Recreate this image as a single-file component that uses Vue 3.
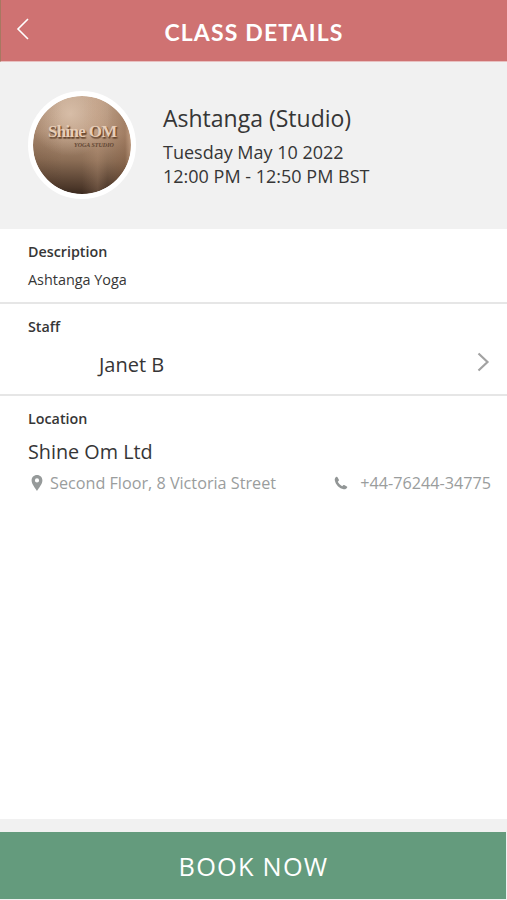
<script setup>
const details = {
  name: 'Ashtanga (Studio)',
  date: 'Tuesday May 10 2022',
  time: '12:00 PM - 12:50 PM BST',
  description: 'Ashtanga Yoga',
  staff: 'Janet B',
  venue: 'Shine Om Ltd',
  address: 'Second Floor, 8 Victoria Street',
  phone: '+44-76244-34775',
}
</script>

<template>
  <div class="screen">
    <header class="bar">
      <svg class="back" width="14" height="22" viewBox="0 0 14 22">
        <path d="M12 1 L2 11 L12 21" fill="none" stroke="#fff" stroke-width="1.6" />
      </svg>
      <h1 class="bar-title">CLASS DETAILS</h1>
    </header>

    <section class="hero">
      <div class="avatar">
        <span class="logo">Shine OM</span>
        <span class="tag">YOGA STUDIO</span>
      </div>
      <div class="summary">
        <h2 class="name">{{ details.name }}</h2>
        <p class="when">{{ details.date }}</p>
        <p class="when">{{ details.time }}</p>
      </div>
    </section>

    <section class="block description">
      <h3 class="label">Description</h3>
      <p class="copy">{{ details.description }}</p>
    </section>

    <section class="block staff">
      <h3 class="label">Staff</h3>
      <div class="staff-row">
        <span class="large">{{ details.staff }}</span>
        <svg width="14" height="20" viewBox="0 0 14 20">
          <path d="M2.500 1.500 L11.500 10 L2.500 18.500" fill="none" stroke="#a2a2a2" stroke-width="2.200" />
        </svg>
      </div>
    </section>

    <section class="location">
      <h3 class="label">Location</h3>
      <p class="large venue">{{ details.venue }}</p>
      <div class="contact">
        <svg class="pin" width="12" height="16" viewBox="0 0 12 16">
          <path fill="#969a9a" fill-rule="evenodd" d="M6 0 C2.8 0 .6 2.4 .6 5.4 C.6 9 4 12.500 6 16 C8 12.500 11.400 9 11.400 5.400 C11.400 2.400 9.200 0 6 0 Z M6 3.300 A2.100 2.100 0 1 1 6 7.500 A2.100 2.100 0 1 1 6 3.300 Z" />
        </svg>
        <span class="address">{{ details.address }}</span>
        <svg class="phone" width="14" height="14" viewBox="0 0 14 14">
          <path fill="#929696" d="M2.600 .8 C1.200 1.500 .5 2.700 .8 4.300 C1.500 8.700 5.400 12.600 9.700 13.200 C11.300 13.400 12.500 12.700 13.200 11.400 C13.300 11 13.200 10.700 12.800 10.500 L10.200 9 C9.800 8.800 9.500 8.900 9.200 9.200 L8.200 10.200 C6.300 9.300 4.700 7.700 3.800 5.800 L4.700 4.800 C5 4.500 5 4.200 4.900 3.800 L3.500 1.200 C3.300 .8 3 .6 2.600 .8 Z" />
        </svg>
        <span class="number">{{ details.phone }}</span>
      </div>
    </section>

    <footer class="footer">
      <button class="book">BOOK NOW</button>
    </footer>
  </div>
</template>

<style>
body {
  margin: 0;
  background: #fff;
}
</style>

<style scoped>
.screen {
  display: flex;
  flex-direction: column;
  width: 507px;
  height: 900px;
  box-sizing: border-box;
  background: #fff;
  color: #363636;
  font-family: "Open Sans", sans-serif;
  overflow: hidden;
}
h1, h2, h3, p {
  margin: 0;
  font-weight: 400;
}
svg {
  display: block;
  flex: none;
}
.bar {
  display: grid;
  grid-template-columns: 60px 1fr 60px;
  height: 62px;
  box-sizing: border-box;
  background: #cf7272;
  border-left: 1px solid #a77861;
  border-bottom: 1px solid #e8c0c0;
}
.back {
  margin: 18px 0 0 15px;
}
.bar-title {
  color: #fff;
  font: 700 23px/64px Lato, sans-serif;
  letter-spacing: 1.15px;
  text-align: center;
  white-space: nowrap;
}
.hero {
  display: flex;
  height: 167px;
  box-sizing: border-box;
  padding: 29px 0 0 28px;
  background: #f1f1f1;
}
.avatar {
  display: flex;
  flex-direction: column;
  width: 108px;
  height: 108px;
  box-sizing: border-box;
  padding-top: 26px;
  border: 5px solid #fff;
  border-radius: 50%;
  background:
    linear-gradient(90deg, rgba(70, 40, 20, 0.12), transparent 30%, transparent 50%, rgba(205, 165, 135, 0.22) 66%, transparent 76%, rgba(120, 78, 50, 0.3) 94%, rgba(220, 180, 150, 0.4)) padding-box,
    radial-gradient(circle at 38% 18%, rgba(236, 214, 194, 0.6), transparent 42%) padding-box,
    linear-gradient(182deg, #bb9d85 0%, #b39278 38%, #8c6e56 65%, #4d382a 92%, #35251b 100%) padding-box,
    #fff;
}
.logo {
  padding-left: 15px;
  color: #e7cdb7;
  font: 700 17px/20px "Liberation Serif", serif;
  letter-spacing: -0.7px;
  white-space: nowrap;
  text-shadow: 1px 1px 1px #65462f, 1px 2px 1px #79583f;
}
.tag {
  padding-left: 41px;
  color: #604532;
  font: italic 700 6px/7px "Liberation Serif", serif;
  white-space: nowrap;
}
.summary {
  padding: 12px 0 0 27px;
  white-space: nowrap;
}
.name {
  margin-bottom: 7px;
  font-size: 23px;
  line-height: 30px;
}
.when {
  font-size: 18px;
  line-height: 24px;
}
.block {
  box-sizing: border-box;
  padding-left: 28px;
  border-bottom: 2px solid #e6e6e6;
}
.description {
  height: 75px;
  padding-top: 9px;
}
.label {
  font-size: 14.3px;
  font-weight: 600;
  line-height: 28px;
}
.copy {
  font-size: 14.4px;
  line-height: 28px;
}
.staff {
  height: 92px;
  padding-top: 9px;
}
.staff-row {
  display: flex;
  align-items: center;
  justify-content: space-between;
  padding: 6px 17px 0 71px;
}
.staff-row svg {
  margin-bottom: 7px;
}
.large {
  font-size: 20px;
  line-height: 36px;
}
.location {
  flex: 1;
  padding: 9px 16px 0 28px;
}
.venue {
  margin-top: 1px;
  font-size: 19.8px;
}
.contact {
  display: flex;
  align-items: center;
  height: 26px;
  color: #9a9d9d;
  font-size: 16.2px;
  line-height: 26px;
  white-space: nowrap;
}
.pin {
  margin: 0 7px 0 3px;
}
.phone {
  margin-left: auto;
  margin-right: 12px;
}
.footer {
  height: 81px;
  box-sizing: border-box;
  padding-top: 13px;
  padding-bottom: 1px;
  background: #f1f1f1;
}
.book {
  display: block;
  width: 506px;
  height: 67px;
  padding: 1px 0 0 1px;
  border: 0;
  background: #649b7d;
  color: #fff;
  font: 400 25.3px/66px "Open Sans", sans-serif;
  letter-spacing: 1.25px;
}
</style>
